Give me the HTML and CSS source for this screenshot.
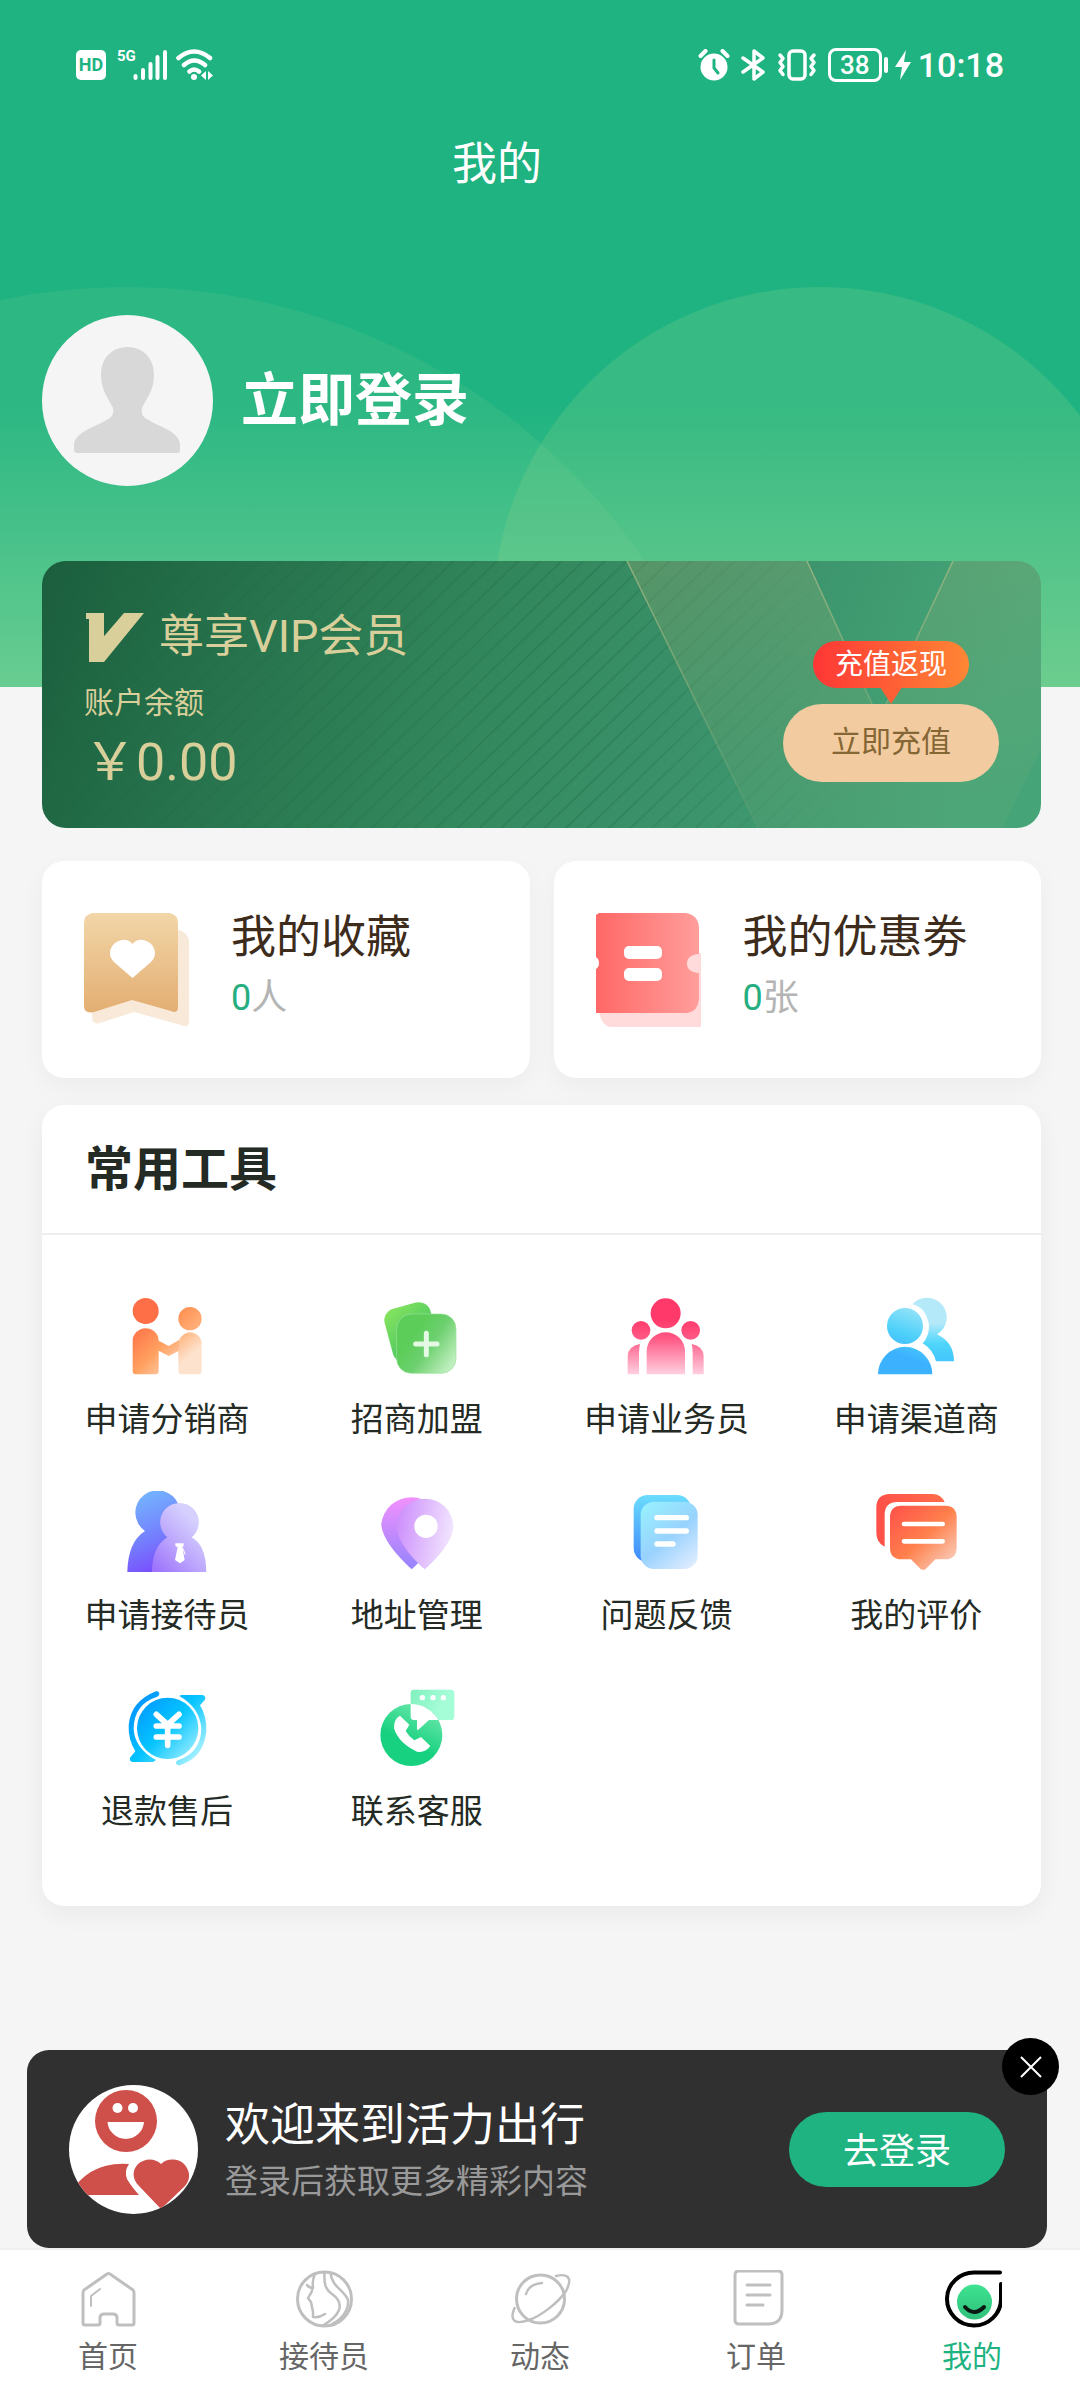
FILE: index.html
```html
<!DOCTYPE html>
<html lang="zh-CN">
<head>
    <meta charset="UTF-8">
    <meta name="viewport" content="width=device-width, initial-scale=1">
    <title>我的</title>
    <link rel="stylesheet" href="styles.css">
</head>
<body>
    <header class="header">
        <svg class="header-bg" width="1080" height="687" viewBox="0 0 1080 687" aria-hidden="true">
            <circle cx="127" cy="913" r="626" fill="#a5dfa0" opacity=".1"/>
            <circle cx="820" cy="614" r="327" fill="#9bd98c" opacity=".2"/>
        </svg>

        <!-- Status bar -->
        <div class="status-bar">
            <div class="status-left">
                <span class="hd">HD</span>
                <span class="net">5G</span>
                <svg class="signal" width="34" height="32" viewBox="0 0 34 32">
                    <path d="M2.5 27v2M10 21v8M17.5 15v14M24.5 8v21M32 3v26" stroke="#fff" stroke-width="4" stroke-linecap="round"/>
                </svg>
                <svg width="38" height="32" viewBox="0 0 38 32" fill="none" stroke="#fff" stroke-width="4.5" stroke-linecap="round">
                    <path d="M2.5 9Q18 -4 34 9M8 16Q18 7 29 16M13.5 22.5Q18 18.5 23 22.5"/>
                    <circle cx="18" cy="28" r="3" fill="#fff" stroke="none"/>
                    <path d="M30 22v9l-5-4.5zM32 22v9l5-4.5z" fill="#fff" stroke="none"/>
                </svg>
            </div>
            <div class="status-right">
                <svg width="32" height="32" viewBox="0 0 32 32" fill="none" stroke="#fff" stroke-linecap="round">
                    <circle cx="16" cy="18" r="13.5" fill="#fff" stroke="none"/>
                    <path d="M2.5 7l5-5M29.5 7l-5-5" stroke-width="4"/>
                    <path d="M16 11v8l4 5" stroke="#1fb381" stroke-width="3"/>
                </svg>
                <svg width="25" height="32" viewBox="0 0 25 32" fill="none" stroke="#fff" stroke-width="3.5" stroke-linejoin="round" stroke-linecap="round">
                    <path d="M2 9l20 14-9 7V2l9 7L2 23"/>
                </svg>
                <svg width="40" height="32" viewBox="0 0 40 32" fill="none" stroke="#fff" stroke-width="3.5" stroke-linecap="round" stroke-linejoin="round">
                    <rect x="12" y="2" width="16" height="28" rx="4"/>
                    <path d="M3 6l3 3.5-3 4 3 4-3 4 3 4M37 6l-3 3.5 3 4-3 4 3 4-3 4"/>
                </svg>
                <span class="battery">38</span>
                <svg class="bolt" width="16" height="30" viewBox="0 0 16 30"><path d="M11 0L0 17h7L5 30l11-18H9z" fill="#fff"/></svg>
                <span class="clock">10:18</span>
            </div>
        </div>

        <h1 class="page-title">我的</h1>

        <a href="#" class="profile">
            <svg class="avatar" width="171" height="171" viewBox="0 0 171 171">
                <circle cx="85.5" cy="85.5" r="85.5" fill="#f5f5f5"/>
                <path d="M85.5 32C101 32 112 43 112 60C112 76 104 84 100 93C98 102 104 104 116 110C130 116 138 122 138 130V135Q138 138 135 138H36Q32 138 32 135V130C32 122 41 116 55 110C67 104 73 102 71 93C67 84 59 76 59 60C59 43 70 32 85.5 32Z" fill="#d8d8d8"/>
            </svg>
            <span class="profile-name">立即登录</span>
        </a>
    </header>

    <main class="content">
        <!-- VIP card -->
        <section class="vip-card">
            <svg class="vip-bg" viewBox="0 0 999 267" preserveAspectRatio="xMaxYMid slice" aria-hidden="true">
                <defs>
                    <linearGradient id="vipBase" x1="0" y1="0" x2="1" y2=".1">
                        <stop offset="0" stop-color="#1b5e3d"/>
                        <stop offset=".18" stop-color="#246f4a"/>
                        <stop offset=".48" stop-color="#33875c"/>
                        <stop offset=".7" stop-color="#3a916a"/>
                        <stop offset="1" stop-color="#46a578"/>
                    </linearGradient>
                    <linearGradient id="vipBand" x1="0" y1="0" x2=".5" y2="1">
                        <stop offset="0" stop-color="#c8b478" stop-opacity=".22"/>
                        <stop offset="1" stop-color="#a0b478" stop-opacity=".08"/>
                    </linearGradient>
                    <linearGradient id="vipLine" x1="0" y1="0" x2="0" y2="267" gradientUnits="userSpaceOnUse">
                        <stop offset="0" stop-color="#a3b882" stop-opacity=".8"/>
                        <stop offset="1" stop-color="#a3b882" stop-opacity=".1"/>
                    </linearGradient>
                    <linearGradient id="stripeFade" x1="0" y1="0" x2="1" y2="0">
                        <stop offset="0" stop-color="#fff" stop-opacity=".2"/>
                        <stop offset=".55" stop-color="#fff"/>
                        <stop offset=".8" stop-color="#fff" stop-opacity="0"/>
                    </linearGradient>
                    <mask id="stripeMask"><rect width="999" height="267" fill="url(#stripeFade)"/></mask>
                    <pattern id="stripes" width="15" height="15" patternUnits="userSpaceOnUse" patternTransform="rotate(-44)">
                        <rect width="15" height="2" fill="#1c6440" opacity=".25"/>
                    </pattern>
                </defs>
                <rect width="999" height="267" fill="url(#vipBase)"/>
                <rect width="999" height="267" fill="url(#stripes)" mask="url(#stripeMask)"/>
                <path d="M585 0H765L837 158L911 0H1091L960 267H716Z" fill="url(#vipBand)"/>
                <path d="M585 0L716 267M765 0L837 158L911 0" fill="none" stroke="url(#vipLine)" stroke-width="1.5"/>
            </svg>
            <div class="vip-info">
                <div class="vip-title">
                    <svg width="58" height="49" viewBox="168 180 174 147"><path d="M168 180H222V250L282 180H342L222 327H177V198H168Z" fill="#d9cf9a"/></svg>
                    <h2>尊享VIP会员</h2>
                </div>
                <p class="vip-label">账户余额</p>
                <p class="vip-balance">&#xFFE5;0.00</p>
            </div>
            <div class="vip-action">
                <span class="cashback">充值返现</span>
                <button type="button" class="recharge-btn">立即充值</button>
            </div>
        </section>

        <!-- Favourites and coupons -->
        <section class="stats">
            <a href="#" class="stat-card">
                <svg width="105" height="114" viewBox="0 0 105 114">
                    <defs>
                        <linearGradient id="fav" x1="0" y1="0" x2="0" y2="1">
                            <stop offset="0" stop-color="#f2d6a8"/>
                            <stop offset="1" stop-color="#e3ae72"/>
                        </linearGradient>
                    </defs>
                    <path d="M90 16Q105 18 105 30V108Q105 116 97 112L50 99L16 110Q8 112 8 104V90Z" fill="#f8e9d8"/>
                    <path d="M8 0H86Q94 2 94 10V94Q94 101 87 98L48 87L10 99Q0 101 0 93V10Q0 2 8 0Z" fill="url(#fav)"/>
                    <path d="M48.5 31C53 25 61 26 66 30C72 35 73 43 67 49L48.5 65L30 49C24 43 25 35 31 30C36 26 44 25 48.5 31Z" fill="#fff"/>
                </svg>
                <div class="stat-text">
                    <h3>我的收藏</h3>
                    <p><span class="num">0</span>人</p>
                </div>
            </a>
            <a href="#" class="stat-card">
                <svg width="105" height="114" viewBox="0 0 105 114">
                    <defs>
                        <linearGradient id="coupon" x1="0" y1="0" x2="1" y2="0">
                            <stop offset="0" stop-color="#ff6866"/>
                            <stop offset="1" stop-color="#ff9e9b"/>
                        </linearGradient>
                    </defs>
                    <path d="M3 98Q5 112 14 114H105V40H80V98Z" fill="#ffdcdb"/>
                    <path d="M3 0H90Q102 2 103 14V41Q91 42 91 50.5Q91 59 103 60V86Q102 98 92 100H0V56Q3 54 3 50Q3 46 0 44V2Z" fill="url(#coupon)"/>
                    <rect x="28" y="33" width="38" height="13" rx="5" fill="#fff"/>
                    <rect x="28" y="55" width="38" height="13" rx="5" fill="#fff"/>
                </svg>
                <div class="stat-text">
                    <h3>我的优惠劵</h3>
                    <p><span class="num">0</span>张</p>
                </div>
            </a>
        </section>

        <!-- Tools -->
        <section class="tools">
            <h2 class="tools-title">常用工具</h2>
            <nav class="tools-grid">
                <a href="#" class="tool">
                    <svg width="84" height="84" viewBox="285 615 252 252">
                        <defs>
                            <linearGradient id="t1" x1="310" y1="700" x2="460" y2="850" gradientUnits="userSpaceOnUse">
                                <stop offset="0" stop-color="#fe6c45"/>
                                <stop offset=".5" stop-color="#ffa05f"/>
                                <stop offset="1" stop-color="#fde3cd"/>
                            </linearGradient>
                            <linearGradient id="t1b" x1="450" y1="650" x2="520" y2="720" gradientUnits="userSpaceOnUse">
                                <stop offset="0" stop-color="#ff8d4e"/>
                                <stop offset="1" stop-color="#ffb783"/>
                            </linearGradient>
                            <linearGradient id="t1c" x1="430" y1="740" x2="480" y2="800" gradientUnits="userSpaceOnUse">
                                <stop offset="0" stop-color="#ffaf76"/>
                                <stop offset="1" stop-color="#fde3cd"/>
                            </linearGradient>
                        </defs>
                        <circle cx="347" cy="663" r="39" fill="#fe6f47"/>
                        <circle cx="480" cy="686" r="35" fill="url(#t1b)"/>
                        <path d="M445 780V844Q445 853 454 853H506Q515 853 515 844V768A35 35 0 0 0 447 752Z" fill="url(#t1c)"/>
                        <path d="M308 755A39 39 0 0 1 386 752L416 768L447 750V782L416 798L386 782V844Q386 853 377 853H317Q308 853 308 844Z" fill="url(#t1)"/>
                    </svg>
                    <span>申请分销商</span>
                </a>
                <a href="#" class="tool">
                    <svg width="84" height="84" viewBox="1034 615 252 252">
                        <defs>
                            <linearGradient id="t2" x1="0" y1="0" x2=".5" y2="1">
                                <stop offset="0" stop-color="#8ae65e"/>
                                <stop offset="1" stop-color="#3cc064"/>
                            </linearGradient>
                            <linearGradient id="t2b" x1=".3" y1=".3" x2="1" y2=".8">
                                <stop offset="0" stop-color="#5bcd58"/>
                                <stop offset=".4" stop-color="#6dd06f"/>
                                <stop offset="1" stop-color="#c4f0c2"/>
                            </linearGradient>
                        </defs>
                        <rect x="1073" y="644" width="142" height="166" rx="36" fill="url(#t2)" transform="rotate(-15 1144 727)"/>
                        <rect x="1099" y="672" width="178" height="178" rx="44" fill="url(#t2b)" stroke="#9be39a" stroke-width="2"/>
                        <path d="M1188 730V794M1156 762H1220" stroke="#e4f9e4" stroke-width="15" stroke-linecap="round"/>
                    </svg>
                    <span>招商加盟</span>
                </a>
                <a href="#" class="tool">
                    <svg width="84" height="84" viewBox="223 615 252 252">
                        <defs>
                            <linearGradient id="t3" x1="0" y1="690" x2="0" y2="853" gradientUnits="userSpaceOnUse">
                                <stop offset="0" stop-color="#ff3a6b"/>
                                <stop offset=".35" stop-color="#ff5a86"/>
                                <stop offset="1" stop-color="#ffd0e0"/>
                            </linearGradient>
                        </defs>
                        <g fill="url(#t3)">
                            <circle cx="348" cy="670" r="45"/>
                            <circle cx="274" cy="721" r="28"/>
                            <circle cx="423" cy="721" r="28"/>
                            <path d="M291 853V784A57 57 0 0 1 406 784V853Z"/>
                            <path d="M234 853V798Q236 768 271 762Q268 775 268 790V853ZM462 853V798Q460 768 426 762Q429 775 429 790V853Z"/>
                        </g>
                    </svg>
                    <span>申请业务员</span>
                </a>
                <a href="#" class="tool">
                    <svg width="84" height="84" viewBox="972 615 252 252">
                        <defs>
                            <linearGradient id="t4" x1="1090" y1="640" x2="1020" y2="840" gradientUnits="userSpaceOnUse">
                                <stop offset="0" stop-color="#a0e6f8"/>
                                <stop offset=".45" stop-color="#4dd0fa"/>
                                <stop offset=".75" stop-color="#3cb2fe"/>
                            </linearGradient>
                            <linearGradient id="t4b" x1="0" y1="700" x2="0" y2="800" gradientUnits="userSpaceOnUse">
                                <stop offset="0" stop-color="#b3e9f9"/>
                                <stop offset=".6" stop-color="#4fd6fb"/>
                                <stop offset="1" stop-color="#45c8fb"/>
                            </linearGradient>
                        </defs>
                        <path d="M1087 643A59 59 0 1 1 1161 733Q1212 757 1212 814H1158Q1150 780 1118 760Q1138 738 1137 705Q1128 652 1087 643Z" fill="url(#t4b)"/>
                        <circle cx="1065" cy="708" r="54" fill="url(#t4)"/>
                        <path d="M984 853A81 82 0 0 1 1147 853Z" fill="url(#t4)"/>
                    </svg>
                    <span>申请渠道商</span>
                </a>
                <a href="#" class="tool">
                    <svg width="84" height="84" viewBox="285 123 252 252">
                        <defs>
                            <linearGradient id="t5" x1=".3" y1="0" x2=".6" y2="1">
                                <stop offset="0" stop-color="#74b6ff"/>
                                <stop offset=".55" stop-color="#7480fd"/>
                                <stop offset="1" stop-color="#7a48fd"/>
                            </linearGradient>
                            <linearGradient id="t5b" x1="370" y1="350" x2="500" y2="220" gradientUnits="userSpaceOnUse">
                                <stop offset="0" stop-color="#9d74fc"/>
                                <stop offset=".5" stop-color="#bca6fd"/>
                                <stop offset="1" stop-color="#d5d0fe"/>
                            </linearGradient>
                        </defs>
                        <path d="M345 243A67 67 0 1 1 446 165L470 366H292Q294 275 345 243Z" fill="url(#t5)"/>
                        <path d="M412 262A58 58 0 1 1 485 262Q528 285 529 366H366Q366 290 412 262Z" fill="url(#t5b)"/>
                        <path d="M436 280H461V287L457 292L464 330L450 340L435 330L443 292L436 287Z" fill="#fff"/>
                        <path d="M458 294L466 314" stroke="#fff" stroke-width="3"/>
                    </svg>
                    <span>申请接待员</span>
                </a>
                <a href="#" class="tool">
                    <svg width="84" height="84" viewBox="1034 123 252 252">
                        <defs>
                            <linearGradient id="t6" x1="0" y1="0" x2="0" y2="1">
                                <stop offset="0" stop-color="#f291fd"/>
                                <stop offset="1" stop-color="#9483fd"/>
                            </linearGradient>
                            <linearGradient id="t6b" x1="0" y1=".4" x2="1" y2=".6">
                                <stop offset="0" stop-color="#cd90fc"/>
                                <stop offset="1" stop-color="#f3e8fe"/>
                            </linearGradient>
                        </defs>
                        <path d="M1144 358C1100 318 1053 262 1053 222A91 90 0 0 1 1234 222C1234 262 1188 318 1144 358Z" fill="url(#t6)"/>
                        <path d="M1183 358C1140 320 1099 268 1099 230A85 84 0 0 1 1269 230C1269 268 1226 320 1183 358Z" fill="url(#t6b)"/>
                        <circle cx="1187" cy="229" r="35" fill="#fff"/>
                    </svg>
                    <span>地址管理</span>
                </a>
                <a href="#" class="tool">
                    <svg width="84" height="84" viewBox="223 123 252 252">
                        <defs>
                            <linearGradient id="t7" x1="0" y1="0" x2="0" y2="1">
                                <stop offset="0" stop-color="#6bdcfd"/>
                                <stop offset="1" stop-color="#3f88fd"/>
                            </linearGradient>
                            <linearGradient id="t7b" x1=".2" y1="0" x2=".9" y2="1">
                                <stop offset="0" stop-color="#97eefe"/>
                                <stop offset=".5" stop-color="#98d2fe"/>
                                <stop offset="1" stop-color="#e2edff"/>
                            </linearGradient>
                        </defs>
                        <rect x="252" y="135" width="172" height="201" rx="42" fill="url(#t7)"/>
                        <rect x="273" y="155" width="171" height="202" rx="40" fill="url(#t7b)"/>
                        <path d="M322 203H410M322 243H410M322 282H370" stroke="#fff" stroke-width="16" stroke-linecap="round"/>
                    </svg>
                    <span>问题反馈</span>
                </a>
                <a href="#" class="tool">
                    <svg width="84" height="84" viewBox="972 123 252 252">
                        <defs>
                            <linearGradient id="t8" x1="0" y1="0" x2="1" y2="1">
                                <stop offset="0" stop-color="#ff504a"/>
                                <stop offset=".5" stop-color="#ff804c"/>
                                <stop offset="1" stop-color="#f8dcd0"/>
                            </linearGradient>
                            <linearGradient id="t8b" x1="0" y1="0" x2="1" y2="0">
                                <stop offset="0" stop-color="#ff5049"/>
                                <stop offset="1" stop-color="#ff6d4a"/>
                            </linearGradient>
                        </defs>
                        <path d="M1004 290Q979 278 979 248V174Q979 132 1020 132H1148Q1172 132 1184 156H1040Q1004 158 1004 194Z" fill="url(#t8b)"/>
                        <path d="M1054 167H1186Q1220 168 1220 202V293Q1220 327 1186 328H1156L1128 356Q1120 363 1111 356L1083 328H1054Q1020 327 1020 293V202Q1020 168 1054 167Z" fill="url(#t8)"/>
                        <path d="M1062 222H1178M1062 274H1178" stroke="#fff" stroke-width="14" stroke-linecap="round"/>
                    </svg>
                    <span>我的评价</span>
                </a>
                <a href="#" class="tool">
                    <svg width="84" height="84" viewBox="285 711 252 252">
                        <defs>
                            <linearGradient id="t9" x1="330" y1="750" x2="500" y2="910" gradientUnits="userSpaceOnUse">
                                <stop offset="0" stop-color="#0398ff"/>
                                <stop offset=".5" stop-color="#04c4ff"/>
                                <stop offset="1" stop-color="#9ceefe"/>
                            </linearGradient>
                        </defs>
                        <circle cx="413" cy="835" r="92" fill="url(#t9)"/>
                        <path d="M378 724Q386 722 388 730Q389 738 382 740Q312 762 311 836Q314 895 378 930L370 936H308Q296 934 301 922L316 904Q294 868 296 826Q302 754 378 724Z" fill="url(#t9)"/>
                        <path d="M448 738L454 735H518Q529 738 525 749L510 766Q531 800 529 844Q522 922 450 946Q440 947 438 940Q437 933 446 930Q514 906 514 834Q508 772 448 738Z" fill="url(#t9)"/>
                        <path d="M379 793L413 824L447 793M413 824V886M379 828H447M379 861H447" fill="none" stroke="#fff" stroke-width="17" stroke-linecap="round"/>
                    </svg>
                    <span>退款售后</span>
                </a>
                <a href="#" class="tool">
                    <svg width="84" height="84" viewBox="1034 711 252 252">
                        <defs>
                            <linearGradient id="t10" x1=".7" y1="0" x2=".4" y2=".6">
                                <stop offset="0" stop-color="#6be8ab"/>
                                <stop offset="1" stop-color="#18d180"/>
                            </linearGradient>
                            <linearGradient id="t10b" x1="0" y1="0" x2=".8" y2=".3">
                                <stop offset="0" stop-color="#7ff0bc"/>
                                <stop offset="1" stop-color="#a5fdd8"/>
                            </linearGradient>
                        </defs>
                        <rect x="1141" y="719" width="131" height="91" rx="10" fill="url(#t10b)"/>
                        <circle cx="1143" cy="855" r="93" fill="url(#t10)"/>
                        <path d="M1141 762A93 93 0 0 1 1224 810H1196L1164 839H1160V810H1150Q1141 809 1141 800Z" fill="#fff"/>
                        <path d="M1109 797L1137 824L1126 843Q1136 860 1152 871L1172 861L1200 888Q1183 910 1160 905Q1105 880 1091 835Q1090 806 1109 797Z" fill="#fff"/>
                        <g fill="#fff">
                            <circle cx="1176" cy="743" r="8"/>
                            <circle cx="1208" cy="743" r="8"/>
                            <circle cx="1239" cy="743" r="8"/>
                        </g>
                    </svg>
                    <span>联系客服</span>
                </a>
            </nav>
        </section>
    </main>

    <!-- Login banner -->
    <aside class="login-banner">
        <svg class="brand" width="129" height="129" viewBox="0 0 129 129">
            <defs><clipPath id="round"><circle cx="64.5" cy="64.5" r="64.5"/></clipPath></defs>
            <g clip-path="url(#round)">
                <rect width="129" height="129" fill="#fff"/>
                <g fill="#cf4f4b">
                    <circle cx="57" cy="36" r="31"/>
                    <path d="M0 110Q20 76 60 79Q55 86 58 94Q62 101 70 110Z"/>
                    <path d="M92 79C98 73 110 73 116 80C122 88 121 95 116 101L92 124L70 101C63 94 63 85 69 79C76 73 86 73 92 79Z"/>
                </g>
                <g fill="#fff">
                    <circle cx="48.5" cy="23" r="5"/>
                    <circle cx="64" cy="23" r="5"/>
                    <path d="M38.5 37H75A18.3 18.3 0 0 1 38.5 37Z"/>
                </g>
            </g>
        </svg>
        <div class="banner-text">
            <h2>欢迎来到活力出行</h2>
            <p>登录后获取更多精彩内容</p>
        </div>
        <button type="button" class="login-btn">去登录</button>
        <button type="button" class="close-btn" aria-label="关闭">
            <svg width="22" height="22" viewBox="0 0 22 22"><path d="M1 1L21 21M21 1L1 21" stroke="#fff" stroke-width="2"/></svg>
        </button>
    </aside>

    <!-- Bottom tabs -->
    <nav class="tab-bar">
        <a href="#" class="tab">
            <svg width="60" height="60" viewBox="0 0 60 60">
                <path d="M32 4L55 20Q56 21 56 23V53Q56 55 54 55H41Q39 55 39 53V48Q39 44 35 44H26Q22 44 22 48V53Q22 55 20 55H7Q5 55 5 53V23Q5 21 6 20L29 4Q30.5 3 32 4Z"/>
                <path d="M13 36V26L22 19" stroke-width="2"/>
            </svg>
            <span>首页</span>
        </a>
        <a href="#" class="tab">
            <svg width="60" height="60" viewBox="0 0 60 60">
                <circle cx="30.5" cy="29" r="27"/>
                <path d="M21 4Q18 10 19 17Q18 23 14 28Q16 31 17 32L18 37L19 42V47Q25 48 31 44M13 15Q15 18 19 18M30.5 2C30 14 31 19 38 24C52 34 46 46 28 56M36.5 3C38 17 50 20 54 30M54 30C55 40 48 49 38 54" stroke-width="2.5"/>
            </svg>
            <span>接待员</span>
        </a>
        <a href="#" class="tab">
            <svg width="64" height="60" viewBox="-1 0 64 60">
                <circle cx="31.5" cy="29" r="24"/>
                <path d="M17 24Q20 14 33 13M47 6C59 3 64 8 57 21C50 32 32 46 20 50C6 55 0 51 5.5 38" stroke-width="2.5"/>
            </svg>
            <span>动态</span>
        </a>
        <a href="#" class="tab">
            <svg width="60" height="60" viewBox="0 0 60 60">
                <path d="M13 1H52Q56 1 56 5V40Q56 54 42 54H13Q9 54 9 50V5Q9 1 13 1Z"/>
                <path d="M21 15H44M21 25H44M21 35H37"/>
            </svg>
            <span>订单</span>
        </a>
        <a href="#" class="tab active">
            <svg width="60" height="60" viewBox="0 0 60 60">
                <defs>
                    <linearGradient id="face" x1="0" y1="0" x2="0" y2="1">
                        <stop offset="0" stop-color="#3ee391"/>
                        <stop offset="1" stop-color="#2fc07a"/>
                    </linearGradient>
                </defs>
                <circle cx="32.5" cy="32" r="17.5" fill="url(#face)" stroke="none"/>
                <path d="M58 2.5H33A27 26.5 0 1 0 59 29V14" stroke="#000" stroke-width="4"/>
                <path d="M23 37Q32 47 42 37" stroke="#0a1a12" stroke-width="4"/>
            </svg>
            <span>我的</span>
        </a>
    </nav>
</body>
</html>
```

FILE: styles.css
```css
* {
    box-sizing: border-box;
    margin: 0;
    padding: 0;
}
body {
    display: flex;
    flex-direction: column;
    min-height: 100vh;
    background: #f5f5f5;
    font-family: Roboto, "Noto Sans CJK SC", sans-serif;
    color: #242a24;
}
a {
    color: inherit;
    text-decoration: none;
}
h1, h2, h3 {
    font-weight: normal;
}
button {
    border: none;
    font-family: inherit;
    cursor: pointer;
}
svg {
    display: block;
    flex-shrink: 0;
}

/* Header */
.header {
    position: relative;
    overflow: hidden;
    padding: 48px 0 201px;
    background: linear-gradient(#1fb381 59%, #62cb90);
    color: #fff;
}
.header-bg {
    position: absolute;
    top: 0;
    left: 0;
}
.status-bar {
    position: relative;
    display: flex;
    justify-content: space-between;
    height: 34px;
    padding: 0 76px;
}
.status-left, .status-right {
    display: flex;
    align-items: center;
}
.status-right {
    gap: 11px;
}
.hd {
    width: 30px;
    margin-right: 11px;
    border-radius: 5px;
    background: #fff;
    color: #1fb381;
    font-size: 18px;
    font-weight: bold;
    line-height: 30px;
    text-align: center;
}
.net {
    align-self: flex-start;
    width: 16px;
    font-size: 15px;
    font-weight: bold;
    line-height: 16px;
}
.signal {
    margin-right: 9px;
}
.battery {
    position: relative;
    width: 54px;
    margin-right: 2px;
    border: 3px solid #fff;
    border-radius: 8px;
    font-size: 26px;
    font-weight: 500;
    line-height: 28px;
    text-align: center;
}
.battery::after {
    content: "";
    position: absolute;
    top: 6px;
    right: -9px;
    width: 4px;
    height: 16px;
    border-radius: 2px;
    background: #fff;
}
.bolt {
    margin-right: -4px;
}
.clock {
    font-size: 34px;
    font-weight: 500;
    line-height: 34px;
}
.page-title {
    position: relative;
    padding: 51px 86px 0 0;
    font-size: 45px;
    line-height: 64px;
    text-align: center;
}
.profile {
    position: relative;
    display: flex;
    align-items: center;
    gap: 28px;
    margin-top: 118px;
    padding-left: 42px;
}
.profile-name {
    font-size: 57px;
    font-weight: bold;
    line-height: 72px;
}

/* Content */
.content {
    position: relative;
    margin-top: -126px;
    padding: 0 39px 0 42px;
}
.vip-card {
    position: relative;
    display: flex;
    justify-content: space-between;
    overflow: hidden;
    padding: 44px 42px 32px;
    border-radius: 24px;
    color: #d9cf9a;
}
.vip-bg {
    position: absolute;
    top: 0;
    left: 0;
    width: 100%;
    height: 100%;
}
.vip-info {
    position: relative;
}
.vip-title {
    display: flex;
    align-items: center;
    gap: 15px;
    padding-left: 2px;
}
.vip-title h2 {
    font-size: 45px;
    line-height: 64px;
}
.vip-label {
    margin-top: 12px;
    font-size: 30px;
    line-height: 44px;
}
.vip-balance {
    margin-top: 5px;
    font-size: 52px;
    line-height: 66px;
}
.vip-action {
    position: relative;
    display: flex;
    flex-direction: column;
    align-items: center;
    gap: 16px;
    padding-top: 36px;
}
.cashback {
    position: relative;
    padding: 0 22px;
    border-radius: 24px;
    background: linear-gradient(90deg, #ff3636, #ff8734);
    color: #fff;
    font-size: 28px;
    line-height: 47px;
}
.cashback::after {
    content: "";
    position: absolute;
    top: 46px;
    left: 50%;
    margin-left: -11px;
    border: 11px solid transparent;
    border-top: 17px solid #ff5f35;
    border-bottom: none;
}
.recharge-btn {
    width: 216px;
    height: 78px;
    padding-bottom: 8px;
    border-radius: 39px;
    background: #f2cca0;
    color: #856635;
    font-size: 30px;
}

.stats {
    display: grid;
    grid-template-columns: 1fr 1fr;
    gap: 24px;
    margin-top: 33px;
}
.stat-card {
    display: flex;
    align-items: center;
    gap: 42px;
    height: 217px;
    padding-left: 42px;
    border-radius: 22px;
    background: #fff;
    box-shadow: 0 8px 24px rgba(0,0,0,0.04);
}
.stat-text {
    padding-bottom: 8px;
}
.stat-text h3 {
    color: #3d2c1c;
    font-size: 45px;
    line-height: 64px;
}
.stat-text p {
    color: #b4b4b4;
    font-size: 36px;
    line-height: 56px;
}
.num {
    color: #27ae80;
}

.tools {
    margin-top: 27px;
    border-radius: 22px;
    background: #fff;
    box-shadow: 0 8px 24px rgba(0,0,0,0.05);
}
.tools-title {
    padding: 29px 43px 27px;
    border-bottom: 2px solid #ededed;
    font-size: 48px;
    font-weight: bold;
    line-height: 72px;
}
.tools-grid {
    display: grid;
    grid-template-columns: repeat(4, 1fr);
    row-gap: 47px;
    padding: 60px 0 70px;
}
.tool {
    display: flex;
    flex-direction: column;
    align-items: center;
    gap: 17px;
    font-size: 33px;
    line-height: 48px;
}

/* Login banner */
.login-banner {
    position: relative;
    display: flex;
    align-items: center;
    margin: auto 33px 0 27px;
    padding: 35px 42px 34px;
    border-radius: 22px;
    background: #303030;
}
.banner-text {
    flex: 1;
    margin-left: 27px;
}
.banner-text h2 {
    color: #fff;
    font-size: 45px;
    line-height: 64px;
}
.banner-text p {
    color: #999;
    font-size: 33px;
    line-height: 48px;
}
.login-btn {
    width: 216px;
    height: 75px;
    padding-bottom: 4px;
    border-radius: 38px;
    background: #1fb381;
    color: #fff;
    font-size: 36px;
}
.close-btn {
    position: absolute;
    top: -12px;
    right: -12px;
    display: flex;
    align-items: center;
    justify-content: center;
    width: 57px;
    height: 57px;
    border-radius: 50%;
    background: #000;
}

/* Bottom tabs */
.tab-bar {
    display: flex;
    border-top: 2px solid #f0f0f0;
    background: #fff;
}
.tab {
    display: flex;
    flex: 1;
    flex-direction: column;
    align-items: center;
    gap: 4px;
    padding: 20px 0 8px;
    color: #666;
    font-size: 30px;
    line-height: 46px;
}
.tab svg {
    fill: none;
    stroke: #bfbfbf;
    stroke-width: 3;
    stroke-linecap: round;
    stroke-linejoin: round;
}
.tab.active {
    color: #1fb381;
}
```
